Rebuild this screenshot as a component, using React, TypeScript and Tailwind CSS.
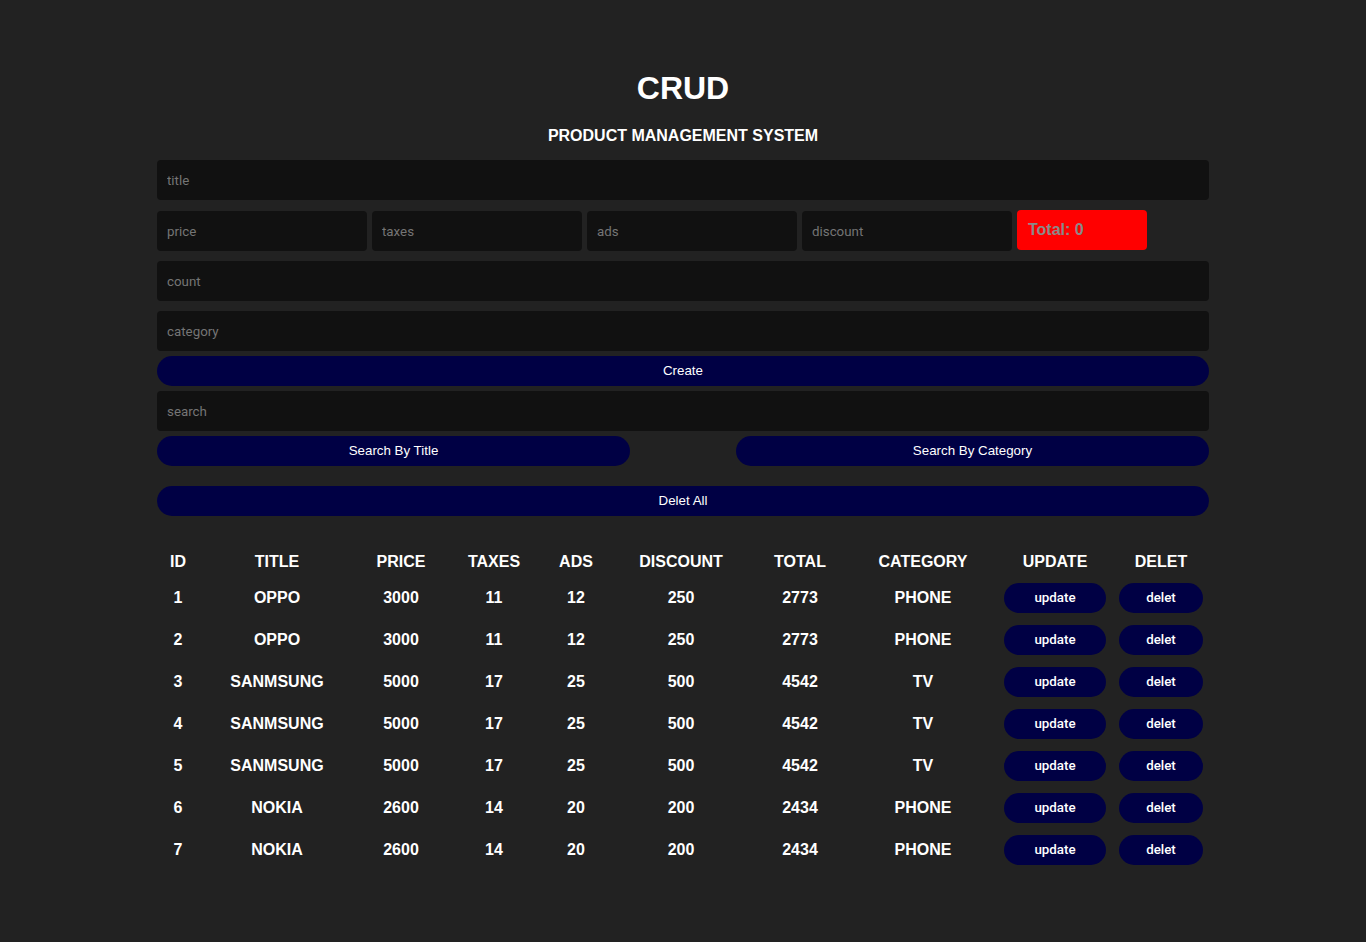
import React from "react";

const rows = [
  [1, "OPPO", 3000, 11, 12, 250, 2773, "PHONE"],
  [2, "OPPO", 3000, 11, 12, 250, 2773, "PHONE"],
  [3, "SANMSUNG", 5000, 17, 25, 500, 4542, "TV"],
  [4, "SANMSUNG", 5000, 17, 25, 500, 4542, "TV"],
  [5, "SANMSUNG", 5000, 17, 25, 500, 4542, "TV"],
  [6, "NOKIA", 2600, 14, 20, 200, 2434, "PHONE"],
  [7, "NOKIA", 2600, 14, 20, 200, 2434, "PHONE"],
];

const heads = ["ID", "TITLE", "PRICE", "TAXES", "ADS", "DISCOUNT", "TOTAL", "CATEGORY", "UPDATE", "DELET"];
const widths = ["w-[42px]", "w-[156px]", "w-[92px]", "w-[94px]", "w-[70px]", "w-[140px]", "w-[98px]", "w-[148px]", "w-[116px]", "w-[96px]"];

function Field({ ph, cls = "" }: { ph: string; cls?: string }) {
  return (
    <input
      placeholder={ph}
      className={`h-[40px] rounded-[4px] bg-[#111111] px-[10px] text-[13.33px] text-white placeholder:text-[#757575] outline-none font-['Roboto',sans-serif] ${cls}`}
    />
  );
}

function Btn({ label, cls = "" }: { label: string; cls?: string }) {
  return (
    <button className={`h-[30px] rounded-full bg-[#000044] text-[13.33px] font-normal text-white font-['Liberation_Sans',Arial,sans-serif] ${cls}`}>
      {label}
    </button>
  );
}

function SmallBtn({ label, cls = "" }: { label: string; cls?: string }) {
  return (
    <button className={`h-[30px] rounded-full bg-[#000044] text-[13.33px] font-medium text-white font-['Roboto',sans-serif] ${cls}`}>
      {label}
    </button>
  );
}

export default function App() {
  return (
    <div className="min-h-[942px] bg-[#222222] font-['Liberation_Sans',Arial,sans-serif] text-white">
      <div className="mx-auto w-[1052px] pt-[70px]">
        <div className="text-center text-[32px] font-bold leading-[37px]">CRUD</div>
        <div className="mt-[20px] text-center text-[16px] font-bold leading-[18px]">PRODUCT MANAGEMENT SYSTEM</div>
        <div className="mt-[15px] flex flex-col">
          <Field ph="title" cls="w-full" />
          <div className="mt-[11px] flex items-center gap-[5px]">
            <Field ph="price" cls="w-[210px]" />
            <Field ph="taxes" cls="w-[210px]" />
            <Field ph="ads" cls="w-[210px]" />
            <Field ph="discount" cls="w-[210px]" />
            <div className="flex h-[40px] w-[130px] -translate-y-[1px] items-center rounded-[4px] bg-[#ff0000] pl-[11px] text-[16px] font-bold text-[#8a8a8a]">
              Total: 0
            </div>
          </div>
          <Field ph="count" cls="mt-[10px] w-full" />
          <Field ph="category" cls="mt-[10px] w-full" />
          <Btn label="Create" cls="mt-[5px] w-full" />
          <Field ph="search" cls="mt-[5px] w-full" />
          <div className="mt-[5px] flex justify-between">
            <Btn label="Search By Title" cls="w-[473px]" />
            <Btn label="Search By Category" cls="w-[473px]" />
          </div>
          <Btn label="Delet All" cls="mt-[20px] w-full" />
        </div>
        <table className="mt-[31px] border-collapse text-center text-[16px] font-bold">
          <thead>
            <tr className="h-[30px]">
              {heads.map((h, i) => (
                <th key={h} className={`${widths[i]} p-0 font-bold`}>{h}</th>
              ))}
            </tr>
          </thead>
          <tbody>
            {rows.map((r) => (
              <tr key={r[0] as number} className="h-[42px]">
                {r.map((c, i) => (
                  <td key={i} className="p-0">{c}</td>
                ))}
                <td className="p-0">
                  <SmallBtn label="update" cls="w-[102px]" />
                </td>
                <td className="p-0">
                  <SmallBtn label="delet" cls="w-[84px]" />
                </td>
              </tr>
            ))}
          </tbody>
        </table>
      </div>
    </div>
  );
}
